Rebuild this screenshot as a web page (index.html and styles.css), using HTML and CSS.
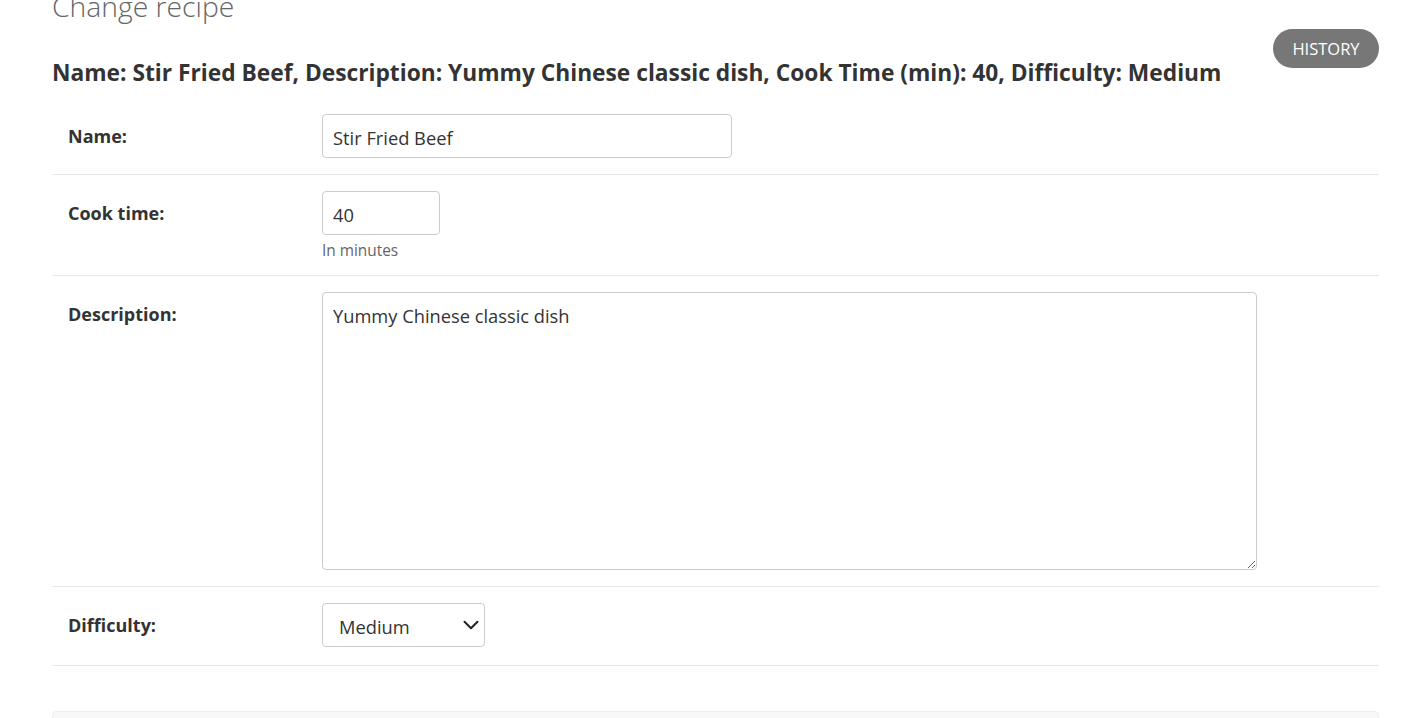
FILE: index.html
```html
<!DOCTYPE html>
<html lang="en">
<head>
<meta charset="utf-8">
<title>Change recipe</title>
<link rel="stylesheet" href="styles.css">
</head>
<body>
<div class="content">
  <h1 class="page-title">Change recipe</h1>
  <div class="header-row">
    <h2 class="object-title">Name: Stir Fried Beef, Description: Yummy Chinese classic dish, Cook Time (min): 40, Difficulty: Medium</h2>
    <ul class="object-tools">
      <li><a class="history-link" href="#">History</a></li>
    </ul>
  </div>
  <form class="change-form">
    <fieldset class="module">
      <div class="form-row">
        <label class="field-label" for="id_name">Name:</label>
        <div class="field-box">
          <input class="text-input name-input" type="text" id="id_name" value="Stir Fried Beef">
        </div>
      </div>
      <div class="form-row">
        <label class="field-label" for="id_cook_time">Cook time:</label>
        <div class="field-box">
          <input class="text-input time-input" type="text" id="id_cook_time" value="40">
          <div class="help">In minutes</div>
        </div>
      </div>
      <div class="form-row">
        <label class="field-label" for="id_description">Description:</label>
        <div class="field-box">
          <textarea class="text-input desc-input" id="id_description">Yummy Chinese classic dish</textarea>
        </div>
      </div>
      <div class="form-row last-row">
        <label class="field-label" for="id_difficulty">Difficulty:</label>
        <div class="field-box">
          <div class="select-wrap">
            <select class="text-input select-input" id="id_difficulty">
              <option>Easy</option>
              <option selected>Medium</option>
              <option>Hard</option>
            </select>
            <svg class="chevron" width="16" height="16" viewBox="0 0 16 16" aria-hidden="true"><path d="M1.5 4.8 L8 11.2 L14.5 4.8" fill="none" stroke="#222" stroke-width="2" stroke-linecap="round" stroke-linejoin="round"/></svg>
          </div>
        </div>
      </div>
    </fieldset>
    <div class="submit-row"></div>
  </form>
</div>
</body>
</html>
```
FILE: styles.css
```css
html, body {
  margin: 0;
  padding: 0;
  background: #fff;
}
body {
  font-family: "Open Sans", "Noto Sans", sans-serif;
  color: #333;
  overflow: hidden;
}
.content {
  padding: 0 44px 0 52px;
}
.page-title {
  margin: -12px 0 0 0;
  font-size: 28.3px;
  font-weight: 300;
  color: #666;
  line-height: 36px;
}
.header-row {
  display: flex;
  justify-content: space-between;
  align-items: flex-start;
  margin-top: 5px;
}
.object-title {
  margin: 29px 0 0 0;
  font-size: 22.75px;
  font-weight: 700;
  color: #333;
  line-height: 30px;
}
.object-tools {
  list-style: none;
  margin: 0;
  padding: 0;
}
.history-link {
  display: flex;
  align-items: center;
  justify-content: center;
  width: 106px;
  height: 39px;
  box-sizing: border-box;
  border-radius: 20px;
  background: #777;
  color: #fff;
  text-decoration: none;
  text-transform: uppercase;
  font-size: 16.5px;
}
.change-form {
  margin: 0;
}
.module {
  border: 0;
  margin: 10px 0 0 0;
  padding: 0;
}
.form-row {
  display: flex;
  align-items: flex-start;
  padding: 16px 16px;
  border-bottom: 1px solid #e8e8e8;
}
.last-row {
  padding-bottom: 18px;
}
.field-label {
  width: 254px;
  flex: none;
  font-weight: 700;
  font-size: 18px;
  line-height: 24px;
  padding-top: 10px;
  color: #333;
}
.field-box {
  display: flex;
  flex-direction: column;
}
.text-input {
  box-sizing: border-box;
  height: 44px;
  border: 1px solid #ccc;
  border-radius: 4px;
  font-family: "Open Sans", "Noto Sans", sans-serif;
  font-size: 18.3px;
  color: #333;
  padding: 3px 10px 0;
  margin: 0;
  background: #fff;
}
.name-input { width: 410px; }
.time-input { width: 118px; }
.desc-input {
  width: 935px;
  height: 278px;
  padding: 10px 10px;
  line-height: 25px;
  resize: both;
}
.help {
  margin-top: 7px;
  font-size: 15.4px;
  color: #666;
  line-height: 17px;
}
.select-wrap {
  position: relative;
  width: 163px;
}
.select-input {
  width: 163px;
  appearance: none;
  -webkit-appearance: none;
  padding: 3px 16px 0;
}
.chevron {
  position: absolute;
  right: 6px;
  top: 14px;
  pointer-events: none;
}
.submit-row {
  margin-top: 45px;
  height: 40px;
  background: #f8f8f8;
  border: 1px solid #eee;
  border-radius: 4px;
}
```
